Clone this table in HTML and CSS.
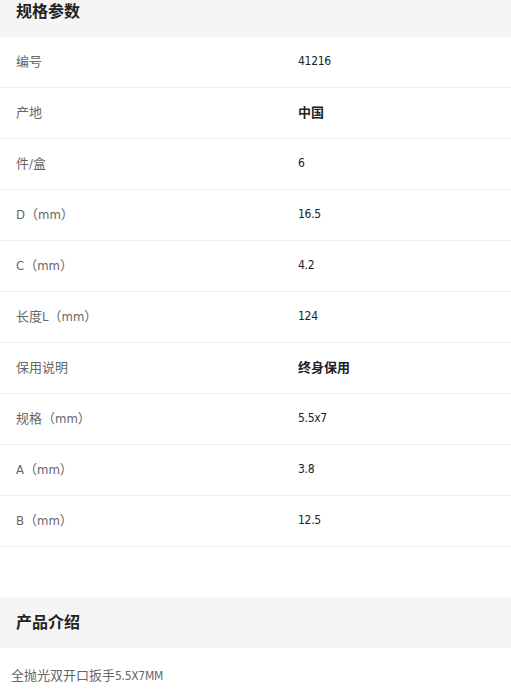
FILE: index.html
```html
<!DOCTYPE html>
<html lang="zh">
<head>
<meta charset="utf-8">
<link rel="stylesheet" href="styles.css">
</head>
<body>
<div class="page">
  <section class="block">
    <h2 class="block-title">规格参数</h2>
    <div class="specs">
      <div class="row"><span class="label">编号</span><span class="value num">41216</span></div>
      <div class="row"><span class="label">产地</span><span class="value strong">中国</span></div>
      <div class="row"><span class="label">件/盒</span><span class="value num">6</span></div>
      <div class="row"><span class="label">D（mm）</span><span class="value num">16.5</span></div>
      <div class="row"><span class="label">C（mm）</span><span class="value num">4.2</span></div>
      <div class="row"><span class="label">长度L（mm）</span><span class="value num">124</span></div>
      <div class="row"><span class="label">保用说明</span><span class="value strong">终身保用</span></div>
      <div class="row"><span class="label">规格（mm）</span><span class="value num">5.5x7</span></div>
      <div class="row"><span class="label">A（mm）</span><span class="value num">3.8</span></div>
      <div class="row"><span class="label">B（mm）</span><span class="value num">12.5</span></div>
    </div>
  </section>
  <section class="block intro">
    <h2 class="block-title">产品介绍</h2>
    <p class="desc">全抛光双开口扳手<span class="num">5.5X7MM</span></p>
  </section>
</div>
</body>
</html>
```
FILE: styles.css
```css
* { box-sizing: border-box; }
html, body { margin: 0; padding: 0; background: #fff; }
body {
  font-family: "Noto Sans CJK SC", "Noto Sans", sans-serif;
  color: #333;
}
.page { margin-top: -14px; }
.block-title {
  margin: 0;
  height: 51px;
  line-height: 49px;
  padding: 0 16px;
  background: #f5f5f5;
  font-size: 16px;
  font-weight: 700;
  color: #222;
}
.specs { padding-bottom: 50px; }
.row {
  display: flex;
  align-items: center;
  height: 51px;
  padding-bottom: 3px;
  border-bottom: 1px solid #eeeeee;
  font-size: 13px;
}
.label {
  width: 298px;
  padding-left: 16px;
  color: #666;
  font-family: "DejaVu Sans Condensed", "Noto Sans CJK SC", sans-serif;
}
.value { color: #222; }
.num {
  font-family: "DejaVu Sans Condensed", "Liberation Sans Narrow", sans-serif;
  font-size: 12px;
  letter-spacing: -0.3px;
}
.strong { font-weight: 700; }
.desc {
  margin: 0;
  padding: 17px 11px;
  font-size: 13px;
  color: #666;
}
.desc .num { font-size: 12px; letter-spacing: -0.3px; }
```
